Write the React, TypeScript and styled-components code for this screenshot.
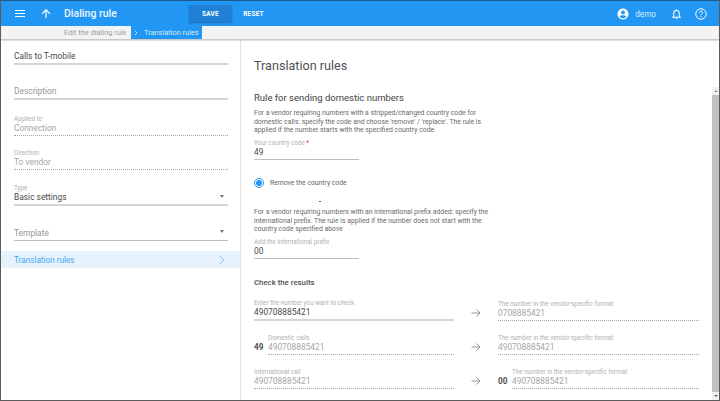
import { FC } from 'react';
import styled, { createGlobalStyle } from 'styled-components';
import { ChevronRight } from 'lucide-react';

const Global = createGlobalStyle`
  html, body { margin: 0; padding: 0; background: #fff; }
  body { font-family: Roboto, "Liberation Sans", sans-serif; overflow: hidden; }
`;

const Frame = styled.div`
  width: 720px;
  height: 401px;
  box-sizing: border-box;
  border: 1px solid #5c5c5c;
  border-top-color: #1a5a8c;
  display: flex;
  flex-direction: column;
  overflow: hidden;
`;

const Toolbar = styled.div`
  height: 25px;
  flex: none;
  background: #2196f3;
  color: #fff;
  display: flex;
  align-items: center;
`;

const IconSlot = styled.div`
  width: 25px;
  box-sizing: border-box;
  padding-left: 2px;
  display: flex;
`;

const MenuSlot = styled(IconSlot)`
  width: 38px;
  padding-left: 14px;
`;

const Title = styled.div`
  font-size: 10.5px;
  font-weight: 500;
  width: 125px;
  color: #eef7fe;
`;

const ToolButton = styled.div<{ $primary?: boolean }>`
  width: 43px;
  height: 17px;
  display: flex;
  align-items: center;
  justify-content: center;
  font-size: 6.5px;
  font-weight: 700;
  letter-spacing: 0.2px;
  border-radius: 1px;
  background: ${(p) => (p.$primary ? '#1e7fd3' : 'transparent')};
  box-shadow: ${(p) => (p.$primary ? '0 1px 2px rgba(0,0,0,.25)' : 'none')};
`;

const ToolRight = styled.div`
  margin-left: auto;
  display: flex;
  align-items: center;
  padding-right: 12px;
`;

const UserName = styled.span`
  font-size: 8.2px;
  margin: 0 15px 0 6px;
  color: #d8ecfd;
`;

const Bell = styled.div`
  display: flex;
  margin-right: 13px;
`;

const Crumbs = styled.div`
  height: 13px;
  flex: none;
  background: #f3f3f3;
  border-bottom: 1px solid #c9c9c9;
  box-shadow: 0 1px 1px rgba(0, 0, 0, 0.12);
  display: flex;
  padding-left: 63px;
  font-size: 7.4px;
  position: relative;
`;

const Crumb = styled.div`
  color: #a0a0a0;
  line-height: 13px;
  width: 67px;
  white-space: nowrap;
`;

const ActiveCrumb = styled.div`
  background: #2196f3;
  color: #d8ecfd;
  height: 13px;
  line-height: 13px;
  width: 71px;
  display: flex;
  align-items: center;
  gap: 4px;
  padding-left: 1px;
  box-sizing: border-box;
  white-space: nowrap;
`;

const Body = styled.div`
  flex: 1;
  display: flex;
  min-height: 0;
`;

const Side = styled.div`
  width: 240px;
  flex: none;
  border-right: 1px solid #e4e4e4;
  box-sizing: border-box;
  padding-top: 5px;
`;

const SideField = styled.div<{ $h: number }>`
  height: ${(p) => p.$h}px;
  margin: 0 12px 0 13px;
  box-sizing: border-box;
  display: flex;
  flex-direction: column;
  justify-content: flex-end;
  position: relative;
`;

const Line = styled.div<{ $kind?: 'solid' | 'dotted' | 'thick' }>`
  border-bottom: ${(p) =>
    p.$kind === 'dotted'
      ? '1px dotted #a8a8a8'
      : p.$kind === 'thick'
        ? '2px solid #d6d6d6'
        : '1px solid #bdbdbd'};
  padding-bottom: 1px;
`;

const Label = styled.div`
  font-size: 6.3px;
  line-height: 8px;
  color: #b0b0b0;
  white-space: nowrap;
`;

const Required = styled.span`
  color: #e53935;
`;

const Value = styled.div<{ $muted?: boolean; $placeholder?: boolean }>`
  font-size: 8.4px;
  line-height: 11px;
  color: ${(p) => (p.$muted ? '#a6a6a6' : p.$placeholder ? '#969696' : '#4a4a4a')};
  white-space: nowrap;
`;

const Caret = styled.div`
  position: absolute;
  right: 4px;
  bottom: 8px;
  border-left: 2.5px solid transparent;
  border-right: 2.5px solid transparent;
  border-top: 3px solid #777;
`;

const SideNav = styled.div`
  margin-top: 10px;
  height: 17px;
  background: #e6f3fd;
  color: #45a6f4;
  font-size: 8.2px;
  display: flex;
  align-items: center;
  justify-content: space-between;
  padding: 0 11px 0 13px;
`;

const Main = styled.div`
  flex: 1;
  display: flex;
  flex-direction: column;
  min-width: 0;
`;

const PageTitle = styled.div`
  height: 47px;
  flex: none;
  box-sizing: border-box;
  padding: 16px 0 0 13px;
  font-size: 12.6px;
  line-height: 20px;
  color: #505050;
`;

const ScrollArea = styled.div`
  flex: 1;
  display: flex;
  min-height: 0;
`;

const Content = styled.div`
  flex: 1;
  padding: 4px 13px 0 13px;
  min-width: 0;
`;

const Section = styled.div`
  font-size: 9.5px;
  line-height: 14px;
  color: #444;
  margin-bottom: 4px;
`;

const Hint = styled.div`
  font-size: 6.85px;
  line-height: 8.5px;
  color: #6a6a6a;
  width: 245px;
`;

const ShortField = styled.div`
  width: 105px;
  margin-top: 4px;
`;

const RadioRow = styled.div`
  display: flex;
  align-items: center;
  gap: 6px;
  margin-top: 18.5px;
  font-size: 6.8px;
  color: #666;
`;

const Radio = styled.div`
  width: 10px;
  height: 10px;
  box-sizing: border-box;
  border: 1px solid #2196f3;
  border-radius: 50%;
  display: flex;
  align-items: center;
  justify-content: center;
  &::after {
    content: '';
    width: 6px;
    height: 6px;
    border-radius: 50%;
    background: #2196f3;
  }
`;

const Dash = styled.div`
  width: 2px;
  height: 1px;
  background: #555;
  margin: 13px 0 6px 65px;
`;

const SubHead = styled.div`
  font-size: 7.8px;
  font-weight: 500;
  line-height: 11px;
  color: #505050;
  margin-top: 18px;
  margin-bottom: -1px;
`;

const ResultRow = styled.div`
  display: grid;
  grid-template-columns: 200px 44px 201px;
  height: 34px;
  align-items: end;
`;

const ArrowCell = styled.div`
  display: flex;
  justify-content: center;
  padding-bottom: 3px;
`;

const Pair = styled.div`
  display: flex;
  align-items: flex-end;
`;

const Prefix = styled.div`
  width: 14px;
  flex: none;
  font-size: 8.2px;
  font-weight: 700;
  color: #505050;
  line-height: 11px;
  padding-bottom: 2px;
`;

const Grow = styled.div`
  flex: 1;
  min-width: 0;
`;

const Scrollbar = styled.div`
  width: 7px;
  flex: none;
  background: #f1f1f1;
  display: flex;
  flex-direction: column;
  align-items: center;
`;

const ScrollBtn = styled.div<{ $down?: boolean }>`
  height: 8px;
  flex: none;
  display: flex;
  align-items: center;
  justify-content: center;
  &::after {
    content: '';
    border-left: 2px solid transparent;
    border-right: 2px solid transparent;
    ${(p) => (p.$down ? 'border-top: 2px solid #666;' : 'border-bottom: 2px solid #999;')}
  }
`;

const Thumb = styled.div`
  flex: 1;
  width: 100%;
  background: #c1c1c1;
`;

const Arrow: FC = () => (
  <svg width="10" height="10" viewBox="0 0 10 10" fill="none" stroke="#8a8a8a" strokeWidth="0.9">
    <path d="M0.5 5H9M5.500 1.500L9 5L5.500 8.500" />
  </svg>
);

type Result = { label: string; value: string; kind?: 'dotted' | 'thick'; muted?: boolean; prefix?: string };

const Output: FC<Result> = ({ label, value, kind = 'dotted', muted = true, prefix }) => (
  <Pair>
    {prefix && <Prefix>{prefix}</Prefix>}
    <Grow>
      <Label>{label}</Label>
      <Line $kind={kind}>
        <Value $muted={muted}>{value}</Value>
      </Line>
    </Grow>
  </Pair>
);

const FORMAT = 'The number in the vendor-specific format';

const App: FC = () => (
  <Frame>
    <Global />
    <Toolbar>
      <MenuSlot>
        <svg width="10" height="7" viewBox="0 0 10 7" fill="#fff">
          <rect y="0" width="10" height="1" />
          <rect y="3" width="10" height="1" />
          <rect y="6" width="10" height="1" />
        </svg>
      </MenuSlot>
      <IconSlot>
        <svg width="10" height="9" viewBox="0 0 10 9" fill="none" stroke="#fff" strokeWidth="1.2">
          <path d="M5 9V1M1 4.800L5 0.800L9 4.800" />
        </svg>
      </IconSlot>
      <Title>Dialing rule</Title>
      <ToolButton $primary>SAVE</ToolButton>
      <ToolButton>RESET</ToolButton>
      <ToolRight>
        <svg width="12" height="12" viewBox="0 0 24 24" fill="#fff">
          <path d="M12 1C5.900 1 1 5.900 1 12s4.900 11 11 11 11-4.900 11-11S18.100 1 12 1zm0 4a3.800 3.800 0 1 1 0 7.600A3.800 3.800 0 0 1 12 5zm0 15.600c-2.900 0-5.400-1.400-6.900-3.600 1-1.700 4.400-2.600 6.900-2.600s5.900.9 6.900 2.600c-1.500 2.200-4 3.600-6.900 3.600z" />
        </svg>
        <UserName>demo</UserName>
        <Bell>
          <svg width="11" height="12" viewBox="0 0 24 24" fill="none" stroke="#fff" strokeWidth="2.200">
            <path d="M6 17V10.500C6 7 8.500 4.500 12 4.500s6 2.500 6 6V17l2 2H4z" />
            <path d="M12 1.500v3M10 21.500h4" />
          </svg>
        </Bell>
        <svg width="12" height="12" viewBox="0 0 24 24" fill="none" stroke="#fff" strokeWidth="2">
          <circle cx="12" cy="12" r="10.500" />
          <path d="M8.800 9.500C8.800 7.600 10.200 6.300 12 6.300s3.200 1.200 3.200 2.900c0 2.500-3.200 2.700-3.200 5.300M12 16.200v2.300" />
        </svg>
      </ToolRight>
    </Toolbar>
    <Crumbs>
      <Crumb>Edit the dialing rule</Crumb>
      <ActiveCrumb>
        <ChevronRight size={8} strokeWidth={2.500} />
        Translation rules
      </ActiveCrumb>
    </Crumbs>
    <Body>
      <Side>
        <SideField $h={20}>
          <Line $kind="thick">
            <Value>Calls to T-mobile</Value>
          </Line>
        </SideField>
        <SideField $h={35}>
          <Line $kind="thick">
            <Value $placeholder>Description</Value>
          </Line>
        </SideField>
        <SideField $h={36}>
          <Label>Applied to</Label>
          <Line $kind="dotted">
            <Value $muted>Connection</Value>
          </Line>
        </SideField>
        <SideField $h={34}>
          <Label>Direction</Label>
          <Line $kind="dotted">
            <Value $muted>To vendor</Value>
          </Line>
        </SideField>
        <SideField $h={36}>
          <Label>Type</Label>
          <Line $kind="thick">
            <Value>Basic settings</Value>
          </Line>
          <Caret />
        </SideField>
        <SideField $h={35}>
          <Line>
            <Value $placeholder>Template</Value>
          </Line>
          <Caret />
        </SideField>
        <SideNav>
          Translation rules
          <ChevronRight size={14} strokeWidth={1.300} color="#5fb0f5" />
        </SideNav>
      </Side>
      <Main>
        <PageTitle>Translation rules</PageTitle>
        <ScrollArea>
          <Content>
            <Section>Rule for sending domestic numbers</Section>
            <Hint>
              For a vendor requiring numbers with a stripped/changed country code for domestic calls: specify the code
              and choose 'remove' / 'replace'. The rule is applied if the number starts with the specified country code
            </Hint>
            <ShortField>
              <Label>
                Your country code <Required>*</Required>
              </Label>
              <Line>
                <Value>49</Value>
              </Line>
            </ShortField>
            <RadioRow>
              <Radio />
              Remove the country code
            </RadioRow>
            <Dash />
            <Hint>
              For a vendor requiring numbers with an international prefix added: specify the international prefix. The
              rule is applied if the number does not start with the country code specified above
            </Hint>
            <ShortField>
              <Label>Add the international prefix</Label>
              <Line>
                <Value>00</Value>
              </Line>
            </ShortField>
            <SubHead>Check the results</SubHead>
            <ResultRow>
              <Output label="Enter the number you want to check" value="490708885421" kind="thick" muted={false} />
              <ArrowCell>
                <Arrow />
              </ArrowCell>
              <Output label={FORMAT} value="0708885421" />
            </ResultRow>
            <ResultRow>
              <Output label="Domestic calls" value="490708885421" prefix="49" />
              <ArrowCell>
                <Arrow />
              </ArrowCell>
              <Output label={FORMAT} value="490708885421" />
            </ResultRow>
            <ResultRow>
              <Output label="International call" value="490708885421" />
              <ArrowCell>
                <Arrow />
              </ArrowCell>
              <Output label={FORMAT} value="490708885421" prefix="00" />
            </ResultRow>
          </Content>
          <Scrollbar>
            <ScrollBtn />
            <Thumb />
            <ScrollBtn $down />
          </Scrollbar>
        </ScrollArea>
      </Main>
    </Body>
  </Frame>
);

export default App;
